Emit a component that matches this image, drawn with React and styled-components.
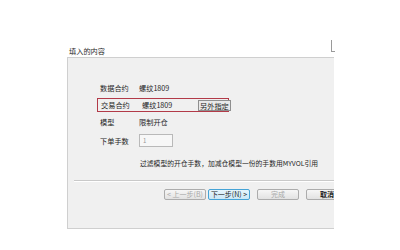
import React from "react"
import styled, { createGlobalStyle } from "styled-components"

const Global = createGlobalStyle`
  html, body {
    margin: 0;
    padding: 0;
    background: #ffffff;
  }
  body {
    width: 400px;
    height: 250px;
    overflow: hidden;
    font-family: "Noto Sans CJK SC", "Noto Sans", sans-serif;
    color: #1e1e1e;
  }
`

const Page = styled.div`
  padding: 40px 0 0 67px;
`

const Dialog = styled.div`
  width: 267px;
  display: flex;
  flex-direction: column;
`

const Header = styled.div`
  position: relative;
  height: 17px;
  display: flex;
  align-items: flex-end;
  padding-left: 2px;
  font-size: 7.2px;
  line-height: 12px;
  color: #2a2a2a;

  .corner {
    position: absolute;
    right: -1px;
    top: 0;
    width: 3px;
    height: 11px;
    border-left: 1px solid #9a9a9a;
    border-bottom: 1px solid #9a9a9a;
  }
`

const Panel = styled.div`
  height: 147px;
  background: #f0f0f0;
  border: 1px solid #cfcfcf;
  border-right: none;
  overflow: hidden;
  display: flex;
  flex-direction: column;
  padding-top: 23px;
`

const Row = styled.div`
  display: flex;
  align-items: center;
  height: ${p => p.$h || 14}px;
  margin-top: ${p => p.$mt || 0}px;
  margin-left: ${p => p.$ml || 32}px;
  font-size: 7.2px;
  white-space: nowrap;
`

const Label = styled.span`
  width: 39px;
  flex: none;
`

const Value = styled.span`
  flex: none;
`

const Highlight = styled.div`
  display: flex;
  align-items: center;
  width: 130px;
  height: 12px;
  margin-top: 3px;
  margin-left: 29px;
  border: 1px solid #b23a48;
  font-size: 7.2px;
  white-space: nowrap;

  ${Label} {
    width: 41px;
    padding-left: 3px;
  }
  ${Value} {
    width: 56px;
  }
`

const SmallButton = styled.span`
  flex: none;
  height: 11px;
  line-height: 10px;
  padding: 0 1px;
  border: 1px solid #8f8f8f;
  background: #e9e9e9;
  font-size: 7.2px;
  box-sizing: border-box;
  white-space: nowrap;
`

const Input = styled.div`
  width: 34px;
  height: 13px;
  box-sizing: border-box;
  border: 1px solid #b9b9b9;
  background: #f7f7f7;
  padding-left: 3px;
  font-size: 6px;
  line-height: 11px;
  color: #999999;
`

const Note = styled.div`
  height: 14px;
  margin-top: 9px;
  margin-left: 72px;
  display: flex;
  align-items: center;
  font-size: 6.8px;
  white-space: nowrap;
`

const Separator = styled.div`
  height: 1px;
  margin: 10px 0 0 6px;
  background: #c9c9c9;
  border-bottom: 1px solid #ffffff;
`

const ButtonBar = styled.div`
  display: flex;
  margin: 7px 0 0 96px;
`

const Button = styled.div`
  flex: none;
  width: 42px;
  height: 11px;
  box-sizing: border-box;
  margin-left: ${p => p.$gap || 0}px;
  border: 1px solid ${p => (p.$primary ? "#45a3d6" : "#acacac")};
  border-radius: 2px;
  background: ${p =>
    p.$primary
      ? "linear-gradient(#e6f5fc, #cbe8f6)"
      : "linear-gradient(#f6f6f6, #e2e2e2)"};
  color: ${p => (p.$disabled ? "#a8a8a8" : "#1e1e1e")};
  font-size: 7px;
  line-height: 9px;
  text-align: center;
  white-space: nowrap;
  font-weight: ${p => (p.$bold ? 700 : 400)};
`

const App = () => {
  return (
    <>
      <Global />
      <Page>
        <Dialog>
          <Header>
            填入的内容
            <span className="corner" />
          </Header>
          <Panel>
            <Row>
              <Label>数据合约</Label>
              <Value>螺纹1809</Value>
            </Row>
            <Highlight>
              <Label>交易合约</Label>
              <Value>螺纹1809</Value>
              <SmallButton>另外指定</SmallButton>
            </Highlight>
            <Row $mt={3}>
              <Label>模型</Label>
              <Value>限制开仓</Value>
            </Row>
            <Row $mt={5} $h={13}>
              <Label>下单手数</Label>
              <Input>1</Input>
            </Row>
            <Note>过滤模型的开仓手数，加减仓模型一份的手数用MYVOL引用</Note>
            <Separator />
            <ButtonBar>
              <Button $disabled>&lt; 上一步(B)</Button>
              <Button $primary $gap={2}>下一步(N) &gt;</Button>
              <Button $disabled $gap={7}>完成</Button>
              <Button $bold $gap={7}>取消</Button>
            </ButtonBar>
          </Panel>
        </Dialog>
      </Page>
    </>
  )
}

export default App
